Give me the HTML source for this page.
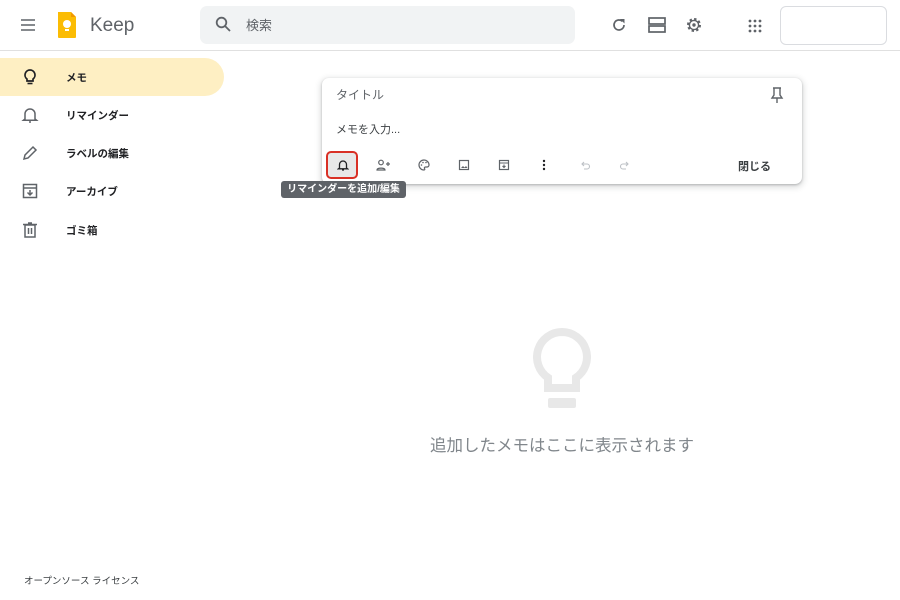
<!DOCTYPE html>
<html><head><meta charset="utf-8"><style>
*{margin:0;padding:0;box-sizing:border-box}
body{width:900px;height:600px;background:#fff;font-family:"Liberation Sans","Noto Sans CJK JP",sans-serif;position:relative;overflow:hidden;color:#202124}
.abs{position:absolute}
svg{display:block}
.nav{position:absolute;left:0;height:38px;width:224px;display:flex;align-items:center;font-size:10.5px;font-weight:bold;color:#202124}
.nav .ic{position:absolute;left:20px;top:9px}
.nav span{position:absolute;left:66px}
.tb{position:absolute;top:159px}
</style></head><body>
<div class="abs" style="left:20px;top:18px"><svg width="16" height="14"><path d="M1 2h14M1 7h14M1 12h14" stroke="#5f6368" stroke-width="1.6"/></svg></div>
<div class="abs" style="left:56px;top:10px"><svg width="22" height="30"><path d="M2 2h13l5 5v20a1 1 0 0 1-1 1H3a1 1 0 0 1-1-1z" fill="#fbbc04"/><path d="M15 2v5h5z" fill="#f29900"/><circle cx="11" cy="14" r="4" fill="#fff"/><rect x="9" y="19" width="4" height="2" fill="#fff"/></svg></div>
<div class="abs" style="left:90px;top:15px;font-size:19px;color:#5f6368">Keep</div>
<div class="abs" style="left:200px;top:6px;width:375px;height:38px;background:#f1f3f4;border-radius:7px"></div>
<div class="abs" style="left:215px;top:16px"><svg width="16" height="16"><circle cx="6.5" cy="6.5" r="4.8" stroke="#5f6368" stroke-width="1.8" fill="none"/><path d="M10 10l5 5" stroke="#5f6368" stroke-width="1.8"/></svg></div>
<div class="abs" style="left:246px;top:15px;font-size:13px;color:#5f6368">検索</div>
<div class="abs" style="left:611px;top:17px"><svg width="16" height="16"><path d="M13 8a5 5 0 1 1-1.5-3.6" stroke="#5f6368" stroke-width="1.7" fill="none"/><path d="M9 2h4.5v4.5z" fill="#5f6368"/></svg></div>
<div class="abs" style="left:648px;top:17px"><svg width="18" height="16"><rect x="1" y="1" width="16" height="6" stroke="#5f6368" stroke-width="1.7" fill="none"/><rect x="1" y="9" width="16" height="6" stroke="#5f6368" stroke-width="1.7" fill="none"/></svg></div>
<div class="abs" style="left:685px;top:16px"><svg width="18" height="18"><circle cx="9" cy="9" r="6" stroke="#5f6368" stroke-width="2" stroke-dasharray="2.4 2.3" fill="none"/><circle cx="9" cy="9" r="4.6" stroke="#5f6368" stroke-width="1.4" fill="none"/><circle cx="9" cy="9" r="1.7" fill="#5f6368"/></svg></div>
<div class="abs" style="left:748px;top:19px"><svg width="14" height="14" fill="#5f6368"><circle cx="2" cy="2" r="1.4"/><circle cx="7" cy="2" r="1.4"/><circle cx="12" cy="2" r="1.4"/><circle cx="2" cy="7" r="1.4"/><circle cx="7" cy="7" r="1.4"/><circle cx="12" cy="7" r="1.4"/><circle cx="2" cy="12" r="1.4"/><circle cx="7" cy="12" r="1.4"/><circle cx="12" cy="12" r="1.4"/></svg></div>
<div class="abs" style="left:780px;top:6px;width:107px;height:39px;border:1px solid #dadce0;border-radius:6px"></div>
<div class="abs" style="left:0;top:50px;width:900px;height:1px;background:#e0e0e0"></div>
<div class="nav" style="top:58px;background:#feefc3;border-radius:0 19px 19px 0"><div class="ic"><svg width="20" height="20"><path d="M10 3a5 5 0 0 0-3 9v2h6v-2a5 5 0 0 0-3-9z" stroke="#202124" stroke-width="1.7" fill="none"/><path d="M7.5 16.5h5" stroke="#202124" stroke-width="1.6"/></svg></div><span>メモ</span></div>
<div class="nav" style="top:96px"><div class="ic"><svg width="20" height="20"><path d="M5 14V9a5 5 0 0 1 10 0v5l1.5 1.2h-13z" stroke="#5f6368" stroke-width="1.5" fill="none"/><path d="M9 17h2" stroke="#5f6368" stroke-width="1.5"/></svg></div><span>リマインダー</span></div>
<div class="nav" style="top:134px"><div class="ic"><svg width="20" height="20"><path d="M4 16l1-4 8-8 3 3-8 8z" stroke="#5f6368" stroke-width="1.5" fill="none"/></svg></div><span>ラベルの編集</span></div>
<div class="nav" style="top:172px"><div class="ic"><svg width="20" height="20"><rect x="3.5" y="3.5" width="13" height="13" stroke="#5f6368" stroke-width="1.5" fill="none"/><path d="M3.5 7h13M10 9v5M7.5 11.5L10 14l2.5-2.5" stroke="#5f6368" stroke-width="1.5" fill="none"/></svg></div><span>アーカイブ</span></div>
<div class="nav" style="top:211px"><div class="ic"><svg width="20" height="20"><path d="M5 5h10v12H5zM3 4.5h14M8 3h4M8.5 8v6M11.5 8v6" stroke="#5f6368" stroke-width="1.5" fill="none"/></svg></div><span>ゴミ箱</span></div>
<div class="abs" style="left:24px;top:573px;font-size:9.5px;color:#3c4043">オープンソース ライセンス</div>
<div class="abs" style="left:322px;top:78px;width:480px;height:106px;border-radius:7px;box-shadow:0 1px 2px rgba(60,64,67,.3),0 2px 6px 2px rgba(60,64,67,.15);background:#fff"></div>
<div class="abs" style="left:336px;top:86px;font-size:12px;color:#5f6368">タイトル</div>
<div class="abs" style="left:770px;top:86px"><svg width="14" height="18"><path d="M3 2h8M4 2v7l-2 3h10l-2-3V2M7 12v5" stroke="#5f6368" stroke-width="1.4" fill="none"/></svg></div>
<div class="abs" style="left:336px;top:121px;font-size:11px;color:#3c4043">メモを入力...</div>
<div class="abs" style="left:326px;top:151px;width:32px;height:28px;border:2px solid #d93025;border-radius:5px;background:#e8e8e8"></div>
<div class="tb" style="left:337px"><svg width="12" height="12"><path d="M2.5 9V5.5a3.5 3.5 0 0 1 7 0V9l1 .8h-9z M5 11h2" stroke="#202124" stroke-width="1.3" fill="none"/></svg></div>
<div class="tb" style="left:376px"><svg width="14" height="12"><circle cx="5" cy="3.5" r="2.3" stroke="#5f6368" stroke-width="1.2" fill="none"/><path d="M1 11c0-2.5 8-2.5 8 0z M10 5h4M12 3v4" stroke="#5f6368" stroke-width="1.2" fill="none"/></svg></div>
<div class="tb" style="left:418px"><svg width="12" height="12"><path d="M6 1a5 5 0 0 0 0 10c1 0 1-1 .5-1.5S6.5 8 7.5 8H9a2 2 0 0 0 2-2c0-3-2.5-5-5-5z" stroke="#5f6368" stroke-width="1.2" fill="none"/><circle cx="3.5" cy="6" r=".8" fill="#5f6368"/><circle cx="5" cy="3.5" r=".8" fill="#5f6368"/><circle cx="8" cy="3.5" r=".8" fill="#5f6368"/></svg></div>
<div class="tb" style="left:458px"><svg width="12" height="12"><rect x="1.5" y="1.5" width="9" height="9" stroke="#5f6368" stroke-width="1.2" fill="none"/><path d="M3 9l2-2 1.5 1.5L8 7l1.5 2z" fill="#5f6368"/></svg></div>
<div class="tb" style="left:498px"><svg width="12" height="12"><rect x="1.5" y="1.5" width="9" height="9" stroke="#5f6368" stroke-width="1.2" fill="none"/><path d="M1.5 4h9M6 5.5v3M4.5 7L6 8.5 7.5 7" stroke="#5f6368" stroke-width="1.1" fill="none"/></svg></div>
<div class="tb" style="left:538px"><svg width="12" height="12" fill="#202124"><circle cx="6" cy="2" r="1.2"/><circle cx="6" cy="6" r="1.2"/><circle cx="6" cy="10" r="1.2"/></svg></div>
<div class="tb" style="left:579px"><svg width="12" height="12"><path d="M3 5h5a2.5 2.5 0 0 1 0 5H5M5 3L3 5l2 2" stroke="#bdc1c6" stroke-width="1.1" fill="none"/></svg></div>
<div class="tb" style="left:619px"><svg width="12" height="12"><path d="M9 5H4a2.5 2.5 0 0 0 0 5h3M7 3l2 2-2 2" stroke="#bdc1c6" stroke-width="1.1" fill="none"/></svg></div>
<div class="abs" style="left:738px;top:158px;font-size:11px;color:#3c4043;font-weight:bold">閉じる</div>
<div class="abs" style="left:281px;top:181px;width:125px;height:17px;background:#5f6368;border-radius:3px;color:#fff;font-size:10px;font-weight:bold;line-height:17px;text-align:center">リマインダーを追加/編集</div>
<div class="abs" style="left:533px;top:328px"><svg width="58" height="82"><path d="M29 4a25 25 0 0 0-14 45.7V60h28V49.7A25 25 0 0 0 29 4z" stroke="#e8e8e8" stroke-width="8" fill="none"/><rect x="15" y="70" width="28" height="10" rx="2" fill="#e8e8e8"/></svg></div>
<div class="abs" style="left:430px;top:432px;font-size:16.5px;color:#80868b">追加したメモはここに表示されます</div>
</body></html>
